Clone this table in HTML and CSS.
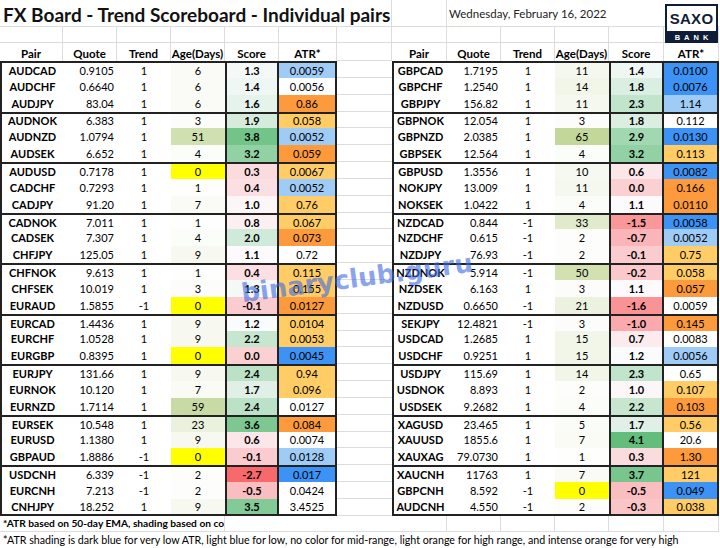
FILE: index.html
```html
<!DOCTYPE html>
<html lang="en">
<head>
<meta charset="utf-8">
<title>FX Board - Trend Scoreboard</title>
<link rel="stylesheet" href="styles.css">
</head>
<body>
<div class="sheet">
  <div class="title">FX Board - Trend Scoreboard - Individual pairs</div>
  <div class="c"></div>
  <div class="date">Wednesday, February 16, 2022</div>

  <div class="c"></div><div class="c"></div><div class="c"></div><div class="c"></div><div class="c"></div><div class="c"></div><div class="c"></div><div class="c"></div><div class="c"></div><div class="c"></div><div class="c"></div><div class="c"></div><div class="c"></div>

  <div class="h">Pair</div><div class="h">Quote</div><div class="h">Trend</div><div class="h">Age(Days)</div><div class="h">Score</div><div class="h">ATR*</div>
  <div class="c"></div>
  <div class="h">Pair</div><div class="h">Quote</div><div class="h">Trend</div><div class="h">Age(Days)</div><div class="h">Score</div><div class="h">ATR*</div>

  <div class="row g">
    <div class="p">AUDCAD</div><div class="q">0.9105</div><div class="t">1</div><div class="a" style="background:#fafbf6">6</div><div class="s" style="background:#f4f9f8">1.3</div><div class="r lb">0.0059</div>
    <div class="x"></div>
    <div class="p">GBPCAD</div><div class="q">1.7195</div><div class="t">1</div><div class="a" style="background:#f5f8ee">11</div><div class="s" style="background:#eff7f4">1.4</div><div class="r db">0.0100</div>
  </div>
  <div class="row">
    <div class="p">AUDCHF</div><div class="q">0.6640</div><div class="t">1</div><div class="a" style="background:#fafbf6">6</div><div class="s" style="background:#eff7f4">1.4</div><div class="r">0.0056</div>
    <div class="x"></div>
    <div class="p">GBPCHF</div><div class="q">1.2540</div><div class="t">1</div><div class="a" style="background:#f2f6e9">14</div><div class="s" style="background:#daeee2">1.8</div><div class="r db">0.0076</div>
  </div>
  <div class="row">
    <div class="p">AUDJPY</div><div class="q">83.04</div><div class="t">1</div><div class="a" style="background:#fafbf6">6</div><div class="s" style="background:#e5f3eb">1.6</div><div class="r io">0.86</div>
    <div class="x"></div>
    <div class="p">GBPJPY</div><div class="q">156.82</div><div class="t">1</div><div class="a" style="background:#f5f8ee">11</div><div class="s" style="background:#c0e4cc">2.3</div><div class="r lb">1.14</div>
  </div>

  <div class="row g">
    <div class="p">AUDNOK</div><div class="q">6.383</div><div class="t">1</div><div class="a" style="background:#fcfdfa">3</div><div class="s" style="background:#d5ecdd">1.9</div><div class="r lo">0.058</div>
    <div class="x"></div>
    <div class="p">GBPNOK</div><div class="q">12.054</div><div class="t">1</div><div class="a" style="background:#fcfdfa">3</div><div class="s" style="background:#daeee2">1.8</div><div class="r">0.112</div>
  </div>
  <div class="row">
    <div class="p">AUDNZD</div><div class="q">1.0794</div><div class="t">1</div><div class="a" style="background:#d1e0b0">51</div><div class="s" style="background:#73c488">3.8</div><div class="r lb">0.0052</div>
    <div class="x"></div>
    <div class="p">GBPNZD</div><div class="q">2.0385</div><div class="t">1</div><div class="a" style="background:#c4d79b">65</div><div class="s" style="background:#a1d7b1">2.9</div><div class="r db">0.0130</div>
  </div>
  <div class="row">
    <div class="p">AUDSEK</div><div class="q">6.652</div><div class="t">1</div><div class="a" style="background:#fbfdf9">4</div><div class="s" style="background:#92d1a3">3.2</div><div class="r io">0.059</div>
    <div class="x"></div>
    <div class="p">GBPSEK</div><div class="q">12.564</div><div class="t">1</div><div class="a" style="background:#fbfdf9">4</div><div class="s" style="background:#92d1a3">3.2</div><div class="r lo">0.113</div>
  </div>

  <div class="row g">
    <div class="p">AUDUSD</div><div class="q">0.7178</div><div class="t">1</div><div class="a y">0</div><div class="s" style="background:#fbdcde">0.3</div><div class="r lo">0.0067</div>
    <div class="x"></div>
    <div class="p">GBPUSD</div><div class="q">1.3556</div><div class="t">1</div><div class="a" style="background:#f6f9f0">10</div><div class="s" style="background:#fbe7ea">0.6</div><div class="r db">0.0082</div>
  </div>
  <div class="row">
    <div class="p">CADCHF</div><div class="q">0.7293</div><div class="t">1</div><div class="a" style="background:#fefefd">1</div><div class="s" style="background:#fbdfe2">0.4</div><div class="r lb">0.0052</div>
    <div class="x"></div>
    <div class="p">NOKJPY</div><div class="q">13.009</div><div class="t">1</div><div class="a" style="background:#f5f8ee">11</div><div class="s" style="background:#fbd0d3">0.0</div><div class="r io">0.166</div>
  </div>
  <div class="row">
    <div class="p">CADJPY</div><div class="q">91.20</div><div class="t">1</div><div class="a" style="background:#f9fbf4">7</div><div class="s" style="background:#fcf6f9">1.0</div><div class="r lo">0.76</div>
    <div class="x"></div>
    <div class="p">NOKSEK</div><div class="q">1.0422</div><div class="t">1</div><div class="a" style="background:#fbfdf9">4</div><div class="s" style="background:#fcfafd">1.1</div><div class="r io">0.0110</div>
  </div>

  <div class="row g">
    <div class="p">CADNOK</div><div class="q">7.011</div><div class="t">1</div><div class="a" style="background:#fefefd">1</div><div class="s" style="background:#fceff2">0.8</div><div class="r lo">0.067</div>
    <div class="x"></div>
    <div class="p">NZDCAD</div><div class="q">0.844</div><div class="t">-1</div><div class="a" style="background:#e1ebcc">33</div><div class="s" style="background:#f99799">-1.5</div><div class="r db">0.0058</div>
  </div>
  <div class="row">
    <div class="p">CADSEK</div><div class="q">7.307</div><div class="t">1</div><div class="a" style="background:#fbfdf9">4</div><div class="s" style="background:#d0ead9">2.0</div><div class="r io">0.073</div>
    <div class="x"></div>
    <div class="p">NZDCHF</div><div class="q">0.615</div><div class="t">-1</div><div class="a" style="background:#fdfefc">2</div><div class="s" style="background:#fab5b8">-0.7</div><div class="r lb">0.0052</div>
  </div>
  <div class="row">
    <div class="p">CHFJPY</div><div class="q">125.05</div><div class="t">1</div><div class="a" style="background:#f7f9f1">9</div><div class="s" style="background:#fcfafd">1.1</div><div class="r">0.72</div>
    <div class="x"></div>
    <div class="p">NZDJPY</div><div class="q">76.93</div><div class="t">-1</div><div class="a" style="background:#fdfefc">2</div><div class="s" style="background:#fbcccf">-0.1</div><div class="r lo">0.75</div>
  </div>

  <div class="row g">
    <div class="p">CHFNOK</div><div class="q">9.613</div><div class="t">1</div><div class="a" style="background:#fefefd">1</div><div class="s" style="background:#fbdfe2">0.4</div><div class="r lo">0.115</div>
    <div class="x"></div>
    <div class="p">NZDNOK</div><div class="q">5.914</div><div class="t">-1</div><div class="a" style="background:#d2e0b2">50</div><div class="s" style="background:#fbc8cb">-0.2</div><div class="r lo">0.058</div>
  </div>
  <div class="row">
    <div class="p">CHFSEK</div><div class="q">10.019</div><div class="t">1</div><div class="a" style="background:#fcfdfa">3</div><div class="s" style="background:#f4f9f8">1.3</div><div class="r lo">0.155</div>
    <div class="x"></div>
    <div class="p">NZDSEK</div><div class="q">6.163</div><div class="t">1</div><div class="a" style="background:#fcfdfa">3</div><div class="s" style="background:#fcfafd">1.1</div><div class="r io">0.057</div>
  </div>
  <div class="row">
    <div class="p">EURAUD</div><div class="q">1.5855</div><div class="t">-1</div><div class="a y">0</div><div class="s" style="background:#fbcccf">-0.1</div><div class="r io">0.0127</div>
    <div class="x"></div>
    <div class="p">NZDUSD</div><div class="q">0.6650</div><div class="t">-1</div><div class="a" style="background:#ecf2df">21</div><div class="s" style="background:#f99395">-1.6</div><div class="r">0.0059</div>
  </div>

  <div class="row g">
    <div class="p">EURCAD</div><div class="q">1.4436</div><div class="t">1</div><div class="a" style="background:#f7f9f1">9</div><div class="s" style="background:#f9fbfd">1.2</div><div class="r lo">0.0104</div>
    <div class="x"></div>
    <div class="p">SEKJPY</div><div class="q">12.4821</div><div class="t">-1</div><div class="a" style="background:#fcfdfa">3</div><div class="s" style="background:#faaaac">-1.0</div><div class="r io">0.145</div>
  </div>
  <div class="row">
    <div class="p">EURCHF</div><div class="q">1.0528</div><div class="t">1</div><div class="a" style="background:#f7f9f1">9</div><div class="s" style="background:#c6e6d0">2.2</div><div class="r lo">0.0053</div>
    <div class="x"></div>
    <div class="p">USDCAD</div><div class="q">1.2685</div><div class="t">1</div><div class="a" style="background:#f1f6e8">15</div><div class="s" style="background:#fcebee">0.7</div><div class="r">0.0083</div>
  </div>
  <div class="row">
    <div class="p">EURGBP</div><div class="q">0.8395</div><div class="t">1</div><div class="a y">0</div><div class="s" style="background:#fbd0d3">0.0</div><div class="r db">0.0045</div>
    <div class="x"></div>
    <div class="p">USDCHF</div><div class="q">0.9251</div><div class="t">1</div><div class="a" style="background:#f1f6e8">15</div><div class="s" style="background:#f9fbfd">1.2</div><div class="r lb">0.0056</div>
  </div>

  <div class="row g">
    <div class="p">EURJPY</div><div class="q">131.66</div><div class="t">1</div><div class="a" style="background:#f7f9f1">9</div><div class="s" style="background:#bbe2c7">2.4</div><div class="r lo">0.94</div>
    <div class="x"></div>
    <div class="p">USDJPY</div><div class="q">115.69</div><div class="t">1</div><div class="a" style="background:#f2f6e9">14</div><div class="s" style="background:#c0e4cc">2.3</div><div class="r">0.65</div>
  </div>
  <div class="row">
    <div class="p">EURNOK</div><div class="q">10.120</div><div class="t">1</div><div class="a" style="background:#f9fbf4">7</div><div class="s" style="background:#e0f0e6">1.7</div><div class="r lo">0.096</div>
    <div class="x"></div>
    <div class="p">USDNOK</div><div class="q">8.893</div><div class="t">1</div><div class="a" style="background:#fdfefc">2</div><div class="s" style="background:#fcf6f9">1.0</div><div class="r lo">0.107</div>
  </div>
  <div class="row">
    <div class="p">EURNZD</div><div class="q">1.7114</div><div class="t">1</div><div class="a" style="background:#c9dba4">59</div><div class="s" style="background:#bbe2c7">2.4</div><div class="r">0.0127</div>
    <div class="x"></div>
    <div class="p">USDSEK</div><div class="q">9.2682</div><div class="t">1</div><div class="a" style="background:#fbfdf9">4</div><div class="s" style="background:#c6e6d0">2.2</div><div class="r io">0.103</div>
  </div>

  <div class="row g">
    <div class="p">EURSEK</div><div class="q">10.548</div><div class="t">1</div><div class="a" style="background:#eaf1dc">23</div><div class="s" style="background:#7dc891">3.6</div><div class="r io">0.084</div>
    <div class="x"></div>
    <div class="p">XAGUSD</div><div class="q">23.465</div><div class="t">1</div><div class="a" style="background:#fafcf7">5</div><div class="s" style="background:#e0f0e6">1.7</div><div class="r lo">0.56</div>
  </div>
  <div class="row">
    <div class="p">EURUSD</div><div class="q">1.1380</div><div class="t">1</div><div class="a" style="background:#f7f9f1">9</div><div class="s" style="background:#fbe7ea">0.6</div><div class="r">0.0074</div>
    <div class="x"></div>
    <div class="p">XAUUSD</div><div class="q">1855.6</div><div class="t">1</div><div class="a" style="background:#f9fbf4">7</div><div class="s" style="background:#63be7b">4.1</div><div class="r">20.6</div>
  </div>
  <div class="row">
    <div class="p">GBPAUD</div><div class="q">1.8886</div><div class="t">-1</div><div class="a y">0</div><div class="s" style="background:#fbcccf">-0.1</div><div class="r lb">0.0128</div>
    <div class="x"></div>
    <div class="p">XAUXAG</div><div class="q">79.0730</div><div class="t">1</div><div class="a" style="background:#fefefd">1</div><div class="s" style="background:#fbdcde">0.3</div><div class="r io">1.30</div>
  </div>

  <div class="row g">
    <div class="p">USDCNH</div><div class="q">6.339</div><div class="t">-1</div><div class="a" style="background:#fdfefc">2</div><div class="s" style="background:#f8696b">-2.7</div><div class="r db">0.017</div>
    <div class="x"></div>
    <div class="p">XAUCNH</div><div class="q">11763</div><div class="t">1</div><div class="a" style="background:#f9fbf4">7</div><div class="s" style="background:#78c68d">3.7</div><div class="r lo">121</div>
  </div>
  <div class="row">
    <div class="p">EURCNH</div><div class="q">7.213</div><div class="t">-1</div><div class="a" style="background:#fdfefc">2</div><div class="s" style="background:#fabdc0">-0.5</div><div class="r">0.0424</div>
    <div class="x"></div>
    <div class="p">GBPCNH</div><div class="q">8.592</div><div class="t">-1</div><div class="a y">0</div><div class="s" style="background:#fabdc0">-0.5</div><div class="r db">0.049</div>
  </div>
  <div class="row last">
    <div class="p">CNHJPY</div><div class="q">18.252</div><div class="t">1</div><div class="a" style="background:#f7f9f1">9</div><div class="s" style="background:#82cb96">3.5</div><div class="r">3.4525</div>
    <div class="x"></div>
    <div class="p">AUDCNH</div><div class="q">4.550</div><div class="t">-1</div><div class="a" style="background:#fdfefc">2</div><div class="s" style="background:#fac5c7">-0.3</div><div class="r lo">0.038</div>
  </div>

  <div class="note1">*ATR based on 50-day EMA, shading based on co</div>
  <div class="blank"></div>
  <div class="c"></div><div class="c"></div><div class="c"></div><div class="c"></div><div class="c"></div><div class="c"></div>

  <div class="note2">*ATR shading is dark blue for very low ATR, light blue for low, no color for mid-range, light orange for high range, and intense orange for very high</div>

  <div class="logo">
    <div class="logo-top">SAXO</div>
    <div class="logo-bottom">BANK</div>
  </div>
  <div class="wm">binaryclub.guru</div>
</div>
</body>
</html>
```

FILE: styles.css
```css
* { box-sizing: border-box; }

html, body {
  margin: 0;
  padding: 0;
  background: #ffffff;
}

body {
  width: 720px;
  height: 548px;
  overflow: hidden;
  font-family: Lato, "Liberation Sans", sans-serif;
  font-size: 11px;
  color: #000;
}

.sheet {
  position: relative;
  display: grid;
  grid-template-columns: 63px 54px 54px 54px 54px 58px 55px 55px 54px 54px 54px 55px 55px;
  grid-template-rows: 27px 16px 18px repeat(27, 16.85px) 16px 16px;
  width: 720px;
  height: 548px;
}

.row { display: contents; }

.c {
  border-right: 1px solid #dadcdd;
  border-bottom: 1px solid #dadcdd;
}

.title {
  grid-column: 1 / 8;
  display: flex;
  align-items: center;
  padding: 2px 0 0 3px;
  font-size: 19px;
  font-weight: 700;
  color: #111;
  white-space: nowrap;
  border-right: 1px solid #dadcdd;
  border-bottom: 1px solid #dadcdd;
}

.date {
  grid-column: 9 / 14;
  display: flex;
  align-items: center;
  padding: 0 0 0 2px;
  font-size: 11.5px;
  color: #222;
  white-space: nowrap;
  border-bottom: 1px solid #dadcdd;
}

.h {
  display: flex;
  align-items: flex-end;
  justify-content: center;
  padding-bottom: 1px;
  font-weight: 700;
  font-size: 11.5px;
  border-right: 1px solid #dadcdd;
  white-space: nowrap;
}

.p, .q, .t, .a, .s, .r {
  display: flex;
  align-items: center;
  justify-content: center;
  background: #ffffff;
  white-space: nowrap;
}

.p {
  font-weight: 700;
  border-left: 2px solid #222;
}

.q {
  justify-content: flex-end;
  padding-right: 3px;
}

.s {
  font-weight: 700;
  border-left: 2px solid #222;
  border-right: 2px solid #222;
}

.r { border-right: 2px solid #222; }

.x { border-bottom: 1px solid #dadcdd; }

.row.g > .p, .row.g > .q, .row.g > .t, .row.g > .a, .row.g > .s, .row.g > .r {
  border-top: 2px solid #222;
}

.row.last > .p, .row.last > .q, .row.last > .t, .row.last > .a, .row.last > .s, .row.last > .r {
  border-bottom: 2px solid #222;
}

.a.y { background: #ffff00; }
.r.db { background: #3c93f5; }
.r.lb { background: #9fcbf7; }
.r.lo { background: #ffcc66; }
.r.io { background: #fd9a3c; }

.note1 {
  grid-column: 1 / 5;
  display: flex;
  align-items: center;
  padding-left: 3px;
  font-weight: 700;
  font-size: 10.2px;
  white-space: nowrap;
  overflow: hidden;
  border-right: 1px solid #dadcdd;
  border-bottom: 1px solid #dadcdd;
}

.blank {
  grid-column: 5 / 8;
  border-bottom: 1px solid #dadcdd;
}

.note2 {
  grid-column: 1 / 14;
  display: flex;
  align-items: center;
  padding-left: 3px;
  font-size: 10.7px;
  white-space: nowrap;
  overflow: hidden;
}

.logo {
  position: absolute;
  left: 665px;
  top: 4px;
  width: 53px;
  height: 39px;
  display: flex;
  flex-direction: column;
}

.logo-top {
  flex: 1;
  display: flex;
  align-items: center;
  justify-content: center;
  background: #fff;
  border: 2px solid #0f1d38;
  border-bottom: none;
  color: #0f1d38;
  font-family: "Liberation Sans", Arial, sans-serif;
  font-weight: 700;
  font-size: 15px;
  letter-spacing: 0.3px;
}

.logo-bottom {
  height: 12px;
  display: flex;
  align-items: center;
  justify-content: center;
  background: #0f1d38;
  color: #fff;
  font-family: "Liberation Sans", Arial, sans-serif;
  font-weight: 700;
  font-size: 7.5px;
  letter-spacing: 4px;
  padding-left: 4px;
}

.wm {
  position: absolute;
  left: 357px;
  top: 278px;
  transform: translate(-50%, -50%) rotate(-7.5deg);
  font-family: "DejaVu Sans", sans-serif;
  font-weight: 700;
  font-size: 26px;
  color: rgba(60, 105, 225, 0.62);
  white-space: nowrap;
  pointer-events: none;
}
```
